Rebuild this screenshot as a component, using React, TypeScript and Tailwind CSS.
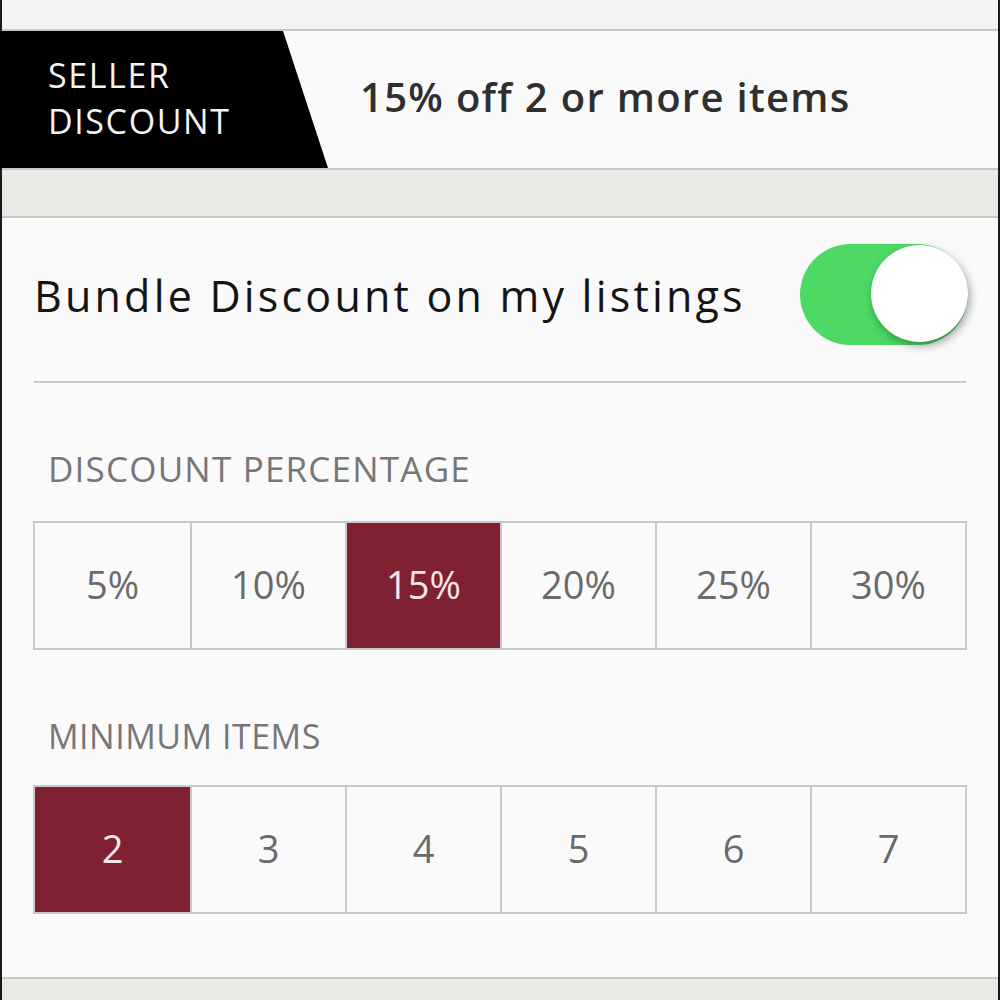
import React from "react";

const percents = ["5%", "10%", "15%", "20%", "25%", "30%"];
const items = ["2", "3", "4", "5", "6", "7"];

function Segmented({ options, selected }: { options: string[]; selected: number }) {
  return (
    <div className="mx-[31px] grid h-[129px] grid-cols-6 border-2 border-[#c9c9c9] bg-[#fbfafb]">
      {options.map((o, i) => (
        <div
          key={o}
          className={
            "flex items-center justify-center pb-[2px] text-[38px] " +
            (i > 0 ? "border-l-2 border-[#c9c9c9] " : "") +
            (i === selected ? "bg-[#7f2130] text-[#f4e6e8]" : "text-[#6a6a6a]")
          }
        >
          {o}
        </div>
      ))}
    </div>
  );
}

export default function App() {
  return (
    <div
      className="relative h-[1000px] w-[1000px] overflow-hidden bg-[#fbfafb]"
      style={{ fontFamily: "'Open Sans', Lato, sans-serif" }}
    >
      <div className="flex h-full flex-col border-l-2 border-r-2 border-[#1a1a1a]">
        {/* top strip */}
        <div className="h-[31px] shrink-0 border-b-2 border-[#c9c7c3] bg-[#f3f3f1]" />

        {/* header */}
        <div className="flex h-[137px] shrink-0 items-center bg-[#fbfafb]">
          <div className="flex h-full w-[328px] shrink-0 -ml-[2px] flex-col justify-center bg-black pb-[4px] pl-[48px] text-[34px] leading-[46px] tracking-[1.6px] text-[#f4f4f4] [clip-path:polygon(0_0,283px_0,328px_100%,0_100%)]">
            <span>SELLER</span>
            <span>DISCOUNT</span>
          </div>
          <div className="ml-[32px] pb-[6px] text-[40px] font-semibold tracking-[1.3px] text-[#2f2f2f]">15% off 2 or more items</div>
        </div>

        {/* gray band */}
        <div className="h-[50px] shrink-0 border-y-2 border-[#c9c7c3] bg-[#ebe9e5]" />

        {/* panel */}
        <div className="flex flex-1 flex-col bg-[#fbfafb]">
          <div className="flex h-[163px] items-center justify-between pb-[6px] pl-[32px] pr-[30px]">
            <span className="text-[43px] tracking-[3.2px] text-[#141414]">Bundle Discount on my listings</span>
            <div className="relative -mt-[4px] h-[101px] w-[168px] rounded-full bg-[#4cd964]">
              <div className="absolute right-0 top-[1px] h-[97px] w-[97px] rounded-full bg-white shadow-[2px_4px_8px_rgba(0,0,0,0.35)]" />
            </div>
          </div>
          <div className="mx-[32px] h-[2px] bg-[#c8c8c8]" />

          <div className="pl-[46px] pt-[66px] pb-[32px] text-[35px] leading-[40px] tracking-[1.2px] text-[#767676]">DISCOUNT PERCENTAGE</div>
          <Segmented options={percents} selected={2} />

          <div className="pl-[46px] pt-[66px] pb-[29px] text-[34px] leading-[40px] tracking-[0.5px] text-[#767676]">MINIMUM ITEMS</div>
          <Segmented options={items} selected={0} />
          <div className="flex-1" />
        </div>

        {/* bottom band */}
        <div className="h-[23px] shrink-0 border-t-2 border-[#c9c7c3] bg-[#ebe9e5]" />
      </div>
    </div>
  );
}
